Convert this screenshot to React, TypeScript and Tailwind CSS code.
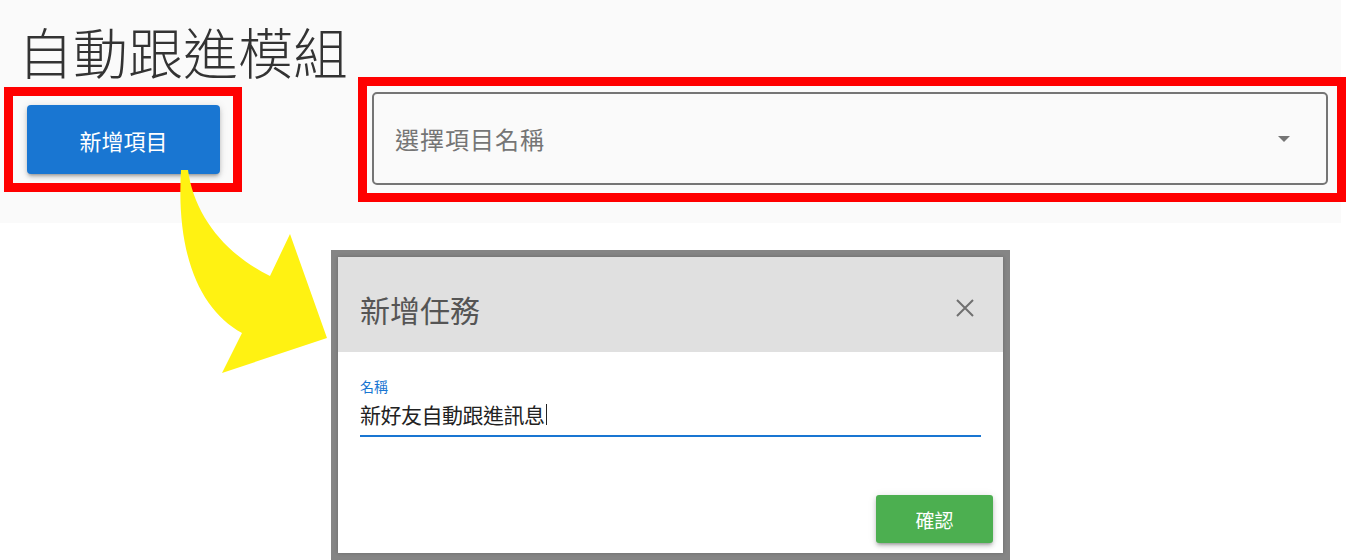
import React from "react";

const cjk = { fontFamily: '"Noto Sans CJK TC", "Noto Sans", sans-serif' };

export default function App() {
  return (
    <div className="relative w-[1346px] h-[560px] overflow-hidden bg-white" style={cjk}>
      {/* top section */}
      <div className="w-[1341px] h-[223px] bg-[#fafafa] flex flex-col">
        <h1 className="mt-[23px] ml-[18px] h-[54px] text-[55px] leading-[54px] font-light text-[#333333] tracking-[0px] whitespace-nowrap">
          自動跟進模組
        </h1>
        <div className="flex items-center h-[125px] pl-[4px] gap-[116px]">
          <div className="shrink-0 w-[238px] h-[105px] border-[9px] border-[#ff0000] flex items-center pl-[14px]">
            <button className="w-[193px] h-[69px] rounded-[4px] bg-[#1976d2] text-white text-[22px] leading-none shadow-[0_3px_3px_-2px_rgba(0,0,0,0.25),0_3px_4px_0_rgba(0,0,0,0.16),0_1px_8px_0_rgba(0,0,0,0.12)] flex items-center justify-center">
              新增項目
            </button>
          </div>
          <div className="shrink-0 w-[988px] h-[125px] border-[9px] border-[#ff0000] pl-[5px] pr-[9px] pt-[6px]">
            <div className="h-[93px] rounded-[5px] border-2 border-[#757575] bg-[#fafafa] flex items-center justify-between pl-[21px] pr-[36px]">
              <span className="text-[24px] leading-none text-[#757575] tracking-[1px]">選擇項目名稱</span>
              <svg width="12" height="6" viewBox="0 0 12 6">
                <path d="M0 0 L12 0 L6 6 Z" fill="#757575" />
              </svg>
            </div>
          </div>
        </div>
      </div>

      {/* dialog */}
      <div className="mt-[27px] ml-[331px] w-[679px] h-[310px] border-[7px] border-[#858585] bg-[#858585]">
        <div className="w-full h-[296px] bg-white flex flex-col shadow-[0_0_4px_rgba(0,0,0,0.2)]">
          <div className="h-[95px] bg-[#e0e0e0] flex items-center justify-between pl-[22px] pr-[29px] pt-[9px]">
            <span className="text-[30px] leading-none text-[#555555]">新增任務</span>
            <svg width="18" height="18" viewBox="0 0 18 18" className="mb-[2px]">
              <path d="M1 1 L17 17 M17 1 L1 17" stroke="#707070" strokeWidth="2" />
            </svg>
          </div>
          <div className="flex-1 flex flex-col px-[22px] pt-[27px]">
            <div className="text-[14px] leading-[14px] text-[#1976d2]">名稱</div>
            <div className="mt-[11px] h-[33px] flex items-start border-b-2 border-[#1976d2]">
              <span className="text-[21px] leading-[21px] text-[#222222] tracking-[-0.5px]">新好友自動跟進訊息</span>
              <span className="ml-[1px] w-[1px] h-[21px] bg-[#222222]" />
            </div>
            <div className="flex-1" />
          </div>
          <div className="flex justify-end pr-[10px] pb-[10px]">
            <button className="w-[117px] h-[48px] rounded-[3px] bg-[#4caf50] text-white text-[19px] leading-none shadow-[0_3px_3px_-2px_rgba(0,0,0,0.25),0_3px_4px_0_rgba(0,0,0,0.16),0_1px_8px_0_rgba(0,0,0,0.12)] flex items-center justify-center">
              確認
            </button>
          </div>
        </div>
      </div>

      {/* yellow annotation arrow */}
      <svg
        className="absolute left-0 top-0 pointer-events-none"
        width="1346"
        height="560"
        viewBox="0 0 1346 560"
      >
        <path
          d="M181 170 L188 170 C194 215 225 254 270 276 L290 234 L327 338 L222 373 L242 333 C200 310 176 255 181 170 Z"
          fill="#fff212"
        />
      </svg>
    </div>
  );
}
